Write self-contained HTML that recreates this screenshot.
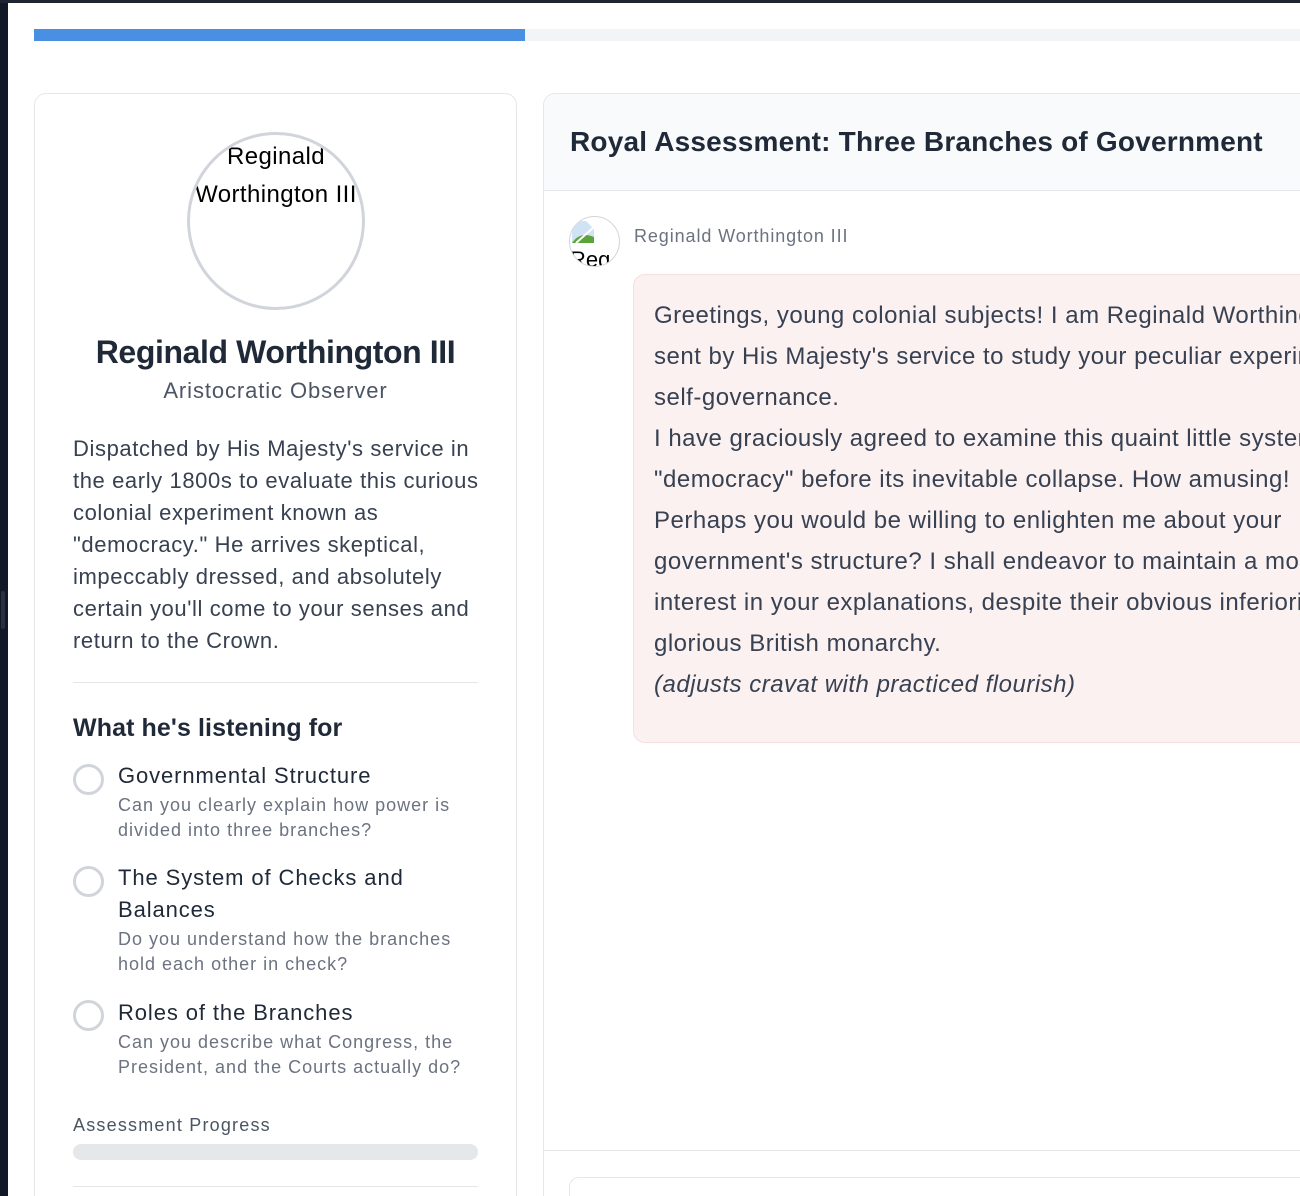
<!DOCTYPE html>
<html><head><meta charset="utf-8">
<style>
*{margin:0;padding:0;box-sizing:border-box}
html,body{width:1300px;height:1196px;overflow:hidden;background:#fff;font-family:"Liberation Sans",sans-serif;position:relative}
.a{position:absolute;white-space:nowrap}
#clip{position:absolute;left:0;top:0;width:1300px;height:1196px;overflow:hidden}
</style></head><body>
<div id="clip">
<div class="a" style="left:0;top:0;width:8px;height:1196px;background:#111827"></div>
<div class="a" style="left:0;top:0;width:1300px;height:3px;background:#1f2433"></div>
<div class="a" style="left:1px;top:591px;width:4px;height:38px;background:#2a3040;border-radius:2px"></div>

<div class="a" style="left:34px;top:29px;width:1266px;height:12px;background:#f3f4f6"></div>
<div class="a" style="left:34px;top:29px;width:491px;height:12px;background:#4a90e2"></div>

<!-- left card -->
<div class="a" style="left:34px;top:93px;width:483px;height:1120px;border:1px solid #e5e7eb;border-radius:12px"></div>
<div class="a" style="left:187px;top:132px;width:178px;height:178px;border:3px solid #d1d5db;border-radius:50%;overflow:hidden">
  <div class="a" style="left:-20px;top:3px;width:212px;text-align:center;font-size:24px;line-height:38px;color:#000;white-space:normal;letter-spacing:0.4px">Reginald<br>Worthington III</div>
</div>
<div class="a" style="left:34px;top:334px;width:483px;text-align:center;font-size:32px;font-weight:bold;color:#1f2937;letter-spacing:-0.4px">Reginald Worthington III</div>
<div class="a" style="left:34px;top:378px;width:483px;text-align:center;font-size:22px;color:#4b5563;letter-spacing:0.9px">Aristocratic Observer</div>
<div class="a" style="left:73px;top:433px;font-size:22px;line-height:32px;color:#374151;letter-spacing:0.6px">Dispatched by His Majesty's service in<br>the early 1800s to evaluate this curious<br>colonial experiment known as<br>"democracy." He arrives skeptical,<br>impeccably dressed, and absolutely<br>certain you'll come to your senses and<br>return to the Crown.</div>
<div class="a" style="left:73px;top:682px;width:405px;height:1px;background:#e5e7eb"></div>
<div class="a" style="left:73px;top:714px;font-size:25px;font-weight:bold;color:#1f2937;letter-spacing:0.1px">What he's listening for</div>

<div class="a" style="left:73px;top:764px;width:31px;height:31px;border:3px solid #d1d5db;border-radius:50%"></div>
<div class="a" style="left:118px;top:763px;font-size:22px;color:#1f2937;letter-spacing:0.9px">Governmental Structure</div>
<div class="a" style="left:118px;top:793px;font-size:18px;line-height:25px;color:#6b7280;letter-spacing:1px">Can you clearly explain how power is<br>divided into three branches?</div>

<div class="a" style="left:73px;top:866px;width:31px;height:31px;border:3px solid #d1d5db;border-radius:50%"></div>
<div class="a" style="left:118px;top:862px;font-size:22px;line-height:32px;color:#1f2937;letter-spacing:0.9px">The System of Checks and<br>Balances</div>
<div class="a" style="left:118px;top:927px;font-size:18px;line-height:25px;color:#6b7280;letter-spacing:1px">Do you understand how the branches<br>hold each other in check?</div>

<div class="a" style="left:73px;top:1000px;width:31px;height:31px;border:3px solid #d1d5db;border-radius:50%"></div>
<div class="a" style="left:118px;top:1000px;font-size:22px;color:#1f2937;letter-spacing:0.9px">Roles of the Branches</div>
<div class="a" style="left:118px;top:1030px;font-size:18px;line-height:25px;color:#6b7280;letter-spacing:1px">Can you describe what Congress, the<br>President, and the Courts actually do?</div>

<div class="a" style="left:73px;top:1115px;font-size:18px;color:#4b5563;letter-spacing:1.2px">Assessment Progress</div>
<div class="a" style="left:73px;top:1144px;width:405px;height:16px;background:#e5e7eb;border-radius:8px"></div>
<div class="a" style="left:73px;top:1186px;width:405px;height:1px;background:#e5e7eb"></div>

<!-- right panel -->
<div class="a" style="left:543px;top:93px;width:757px;height:1103px;border-left:1px solid #e5e7eb;border-top:1px solid #e5e7eb;border-top-left-radius:12px;overflow:hidden">
  <div class="a" style="left:0;top:0;width:757px;height:97px;background:#f9fafb;border-bottom:1px solid #e5e7eb"></div>
  <div class="a" style="left:26px;top:32px;font-size:28px;font-weight:bold;color:#1f2937;letter-spacing:0.2px">Royal Assessment: Three Branches of Government</div>

  <div class="a" style="left:25px;top:122px;width:51px;height:51px;border:1px solid #d1d5db;border-radius:50%;overflow:hidden;background:#fff">
    <svg class="a" style="left:2px;top:2px" width="26" height="26" viewBox="0 0 26 26"><rect x="0" y="2" width="22" height="22" fill="#cfe3f5"/><path d="M0 24 Q8 12 22 18 L22 24Z" fill="#5aa43a"/><path d="M14 2 L22 2 L22 10Z" fill="#fff"/><path d="M4 24 L22 8" stroke="#fff" stroke-width="2"/></svg>
    <div class="a" style="left:0;top:30px;font-size:22px;color:#000">Reg</div>
  </div>
  <div class="a" style="left:90px;top:132px;font-size:18px;color:#6b7280;letter-spacing:0.9px">Reginald Worthington III</div>

  <div class="a" style="left:89px;top:180px;width:700px;height:469px;background:#fcf1f1;border:1px solid #f8dede;border-radius:12px;overflow:hidden">
    <div class="a" style="left:20px;top:20px;font-size:24px;line-height:41px;color:#374151;letter-spacing:0.5px">Greetings, young colonial subjects! I am Reginald Worthington III,<br>sent by His Majesty's service to study your peculiar experiment in<br>self-governance.<br>I have graciously agreed to examine this quaint little system of<br>"democracy" before its inevitable collapse. How amusing!<br>Perhaps you would be willing to enlighten me about your<br>government's structure? I shall endeavor to maintain a modicum of<br>interest in your explanations, despite their obvious inferiority to our<br>glorious British monarchy.<br><i>(adjusts cravat with practiced flourish)</i></div>
  </div>

  <div class="a" style="left:0;top:1056px;width:757px;height:1px;background:#e5e7eb"></div>
  <div class="a" style="left:25px;top:1083px;width:760px;height:60px;border:1px solid #e5e7eb;border-radius:10px"></div>
</div>
</div>
</body></html>
